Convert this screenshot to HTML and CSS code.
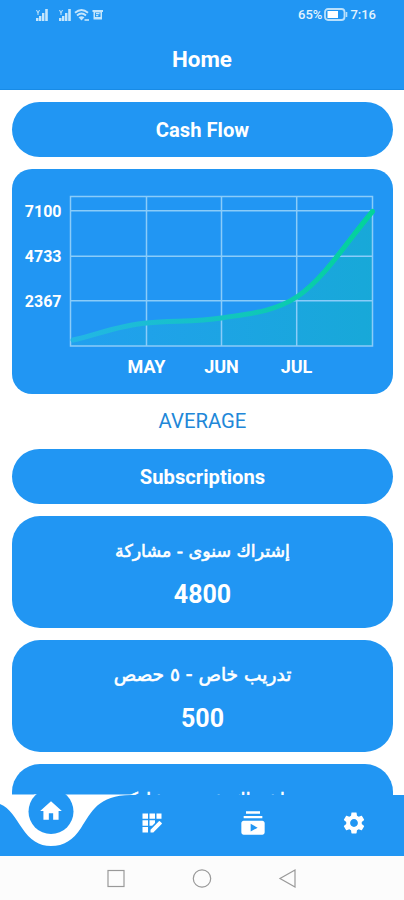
FILE: index.html
```html
<!DOCTYPE html>
<html lang="en">
<head>
	<meta charset="utf-8" />
	<meta name="viewport" content="width=device-width, initial-scale=1">
	<title>Home</title>
	<link rel="stylesheet" href="styles.css">
</head>
<body>
	<div class="phone">
		<div class="statusbar">
			<svg class="signals" width="70" height="14" viewBox="0 0 70 14">
				<g fill="#c5e6fc">
					<path d="M1 13v-3h2.500v3zM4 13V8h2.400v5zM7 13V5h2.400v8zM10.200 13V1h2.600v12zM1 2h1l1 2 1-2h1L3.500 5v2h-1V5z" />
					<path d="M24 13v-3h2.500v3zM27 13V8h2.400v5zM30 13V5h2.400v8zM33.200 13V1h2.600v12zM24 2h1l1 2 1-2h1l-1.500 3v2h-1V5z" />
					<path d="M57.500 2H68v2h-1v7.500h-8.500V4h-1zM60 4.500V9h5.500V4.500z" fill-rule="evenodd" />
					<path d="M61 5h3.500v1.200H61zM61 7h2.300v1.200H61z" />
					<path d="M43.500 9.200l3 3.300 3-3.300q-3-2-6 0z" />
				</g>
				<path d="M40 4.800q6.500-5.600 13 0M42 7.500q4.500-4 9 0" fill="none" stroke="#c5e6fc" stroke-width="1.800" />
				<path d="M49.500 12h4.500" stroke="#c5e6fc" stroke-width="1.600" />
			</svg>
			<div class="status-right">
				<span>65%</span>
				<svg width="24" height="13" viewBox="0 0 24 13">
					<rect x="1" y="1" width="19.500" height="11" rx="3" fill="none" stroke="#b9e0fc" stroke-width="1.800" />
					<rect x="3.500" y="3" width="10.500" height="7" fill="#fff" />
					<path d="M22.500 4v5" stroke="#b9e0fc" stroke-width="1.600" />
				</svg>
				<span>7:16</span>
			</div>
		</div>
		<header class="appbar">Home</header>

		<main class="content">
			<h2 class="pill">Cash Flow</h2>
			<div class="chart">
				<svg width="381" height="225" viewBox="12 169 381 225">
					<defs>
						<linearGradient id="line" x1="0" x2="1" y1="0" y2="0">
							<stop offset="0" stop-color="#23b6e6" />
							<stop offset="1" stop-color="#02d39a" />
						</linearGradient>
					</defs>
					<path class="area" d="M71 340.500C96 335 118 325.500 146.500 323C172 320.500 196 322 221.500 318C246 314 273 312.500 296.700 297C325 278 348 240 373 210.700V346H71z" />
					<path class="grid" d="M70.500 196.500H372.500V346H70.500zM71 210.700H373M71 256.200H373M71 300.700H373M146.500 196.500V346M221.500 196.500V346M296.700 196.500V346" />
					<path class="curve" d="M73 340C96 335 118 325.500 146.500 323C172 320.500 196 322 221.500 318C246 314 273 312.500 296.700 297C325 278 348 240 372.500 211.500" />
					<g class="ylabels">
						<text x="61.500" y="216.500">7100</text>
						<text x="61.500" y="261.500">4733</text>
						<text x="61.500" y="306.500">2367</text>
					</g>
					<g class="xlabels">
						<text x="146.500" y="373">MAY</text>
						<text x="221.500" y="373">JUN</text>
						<text x="296.500" y="373">JUL</text>
					</g>
				</svg>
			</div>
			<p class="average">AVERAGE</p>
			<h2 class="pill">Subscriptions</h2>
			<section class="card">
				<div class="name" dir="rtl" lang="ar">إشتراك سنوى - مشاركة</div>
				<div class="value">4800</div>
			</section>
			<section class="card">
				<div class="name wide" dir="rtl" lang="ar">تدريب خاص - ٥ حصص</div>
				<div class="value">500</div>
			</section>
			<section class="card">
				<div class="name" dir="rtl" lang="ar">إشتراك شهر - مشاركة</div>
			</section>
		</main>

		<nav class="tabs">
			<svg class="tabs-bg" width="404" height="62" viewBox="0 794 404 62">
				<path d="M34 794.500H131V810L90 846H20L0 804C6 806 12 812 20 822z" fill="#fff" />
				<path d="M0 794.500H40V815H0z" fill="#fff" />
				<path d="M0 804C10 808 15 818 22 828C30 840 39 846 51 846C64 846 73 840 81 828C92 811 98 795.500 131 795H404V856H0z" fill="#2196f3" />
				<circle cx="51" cy="811.500" r="22.500" fill="#2196f3" />
			</svg>
			<a class="tab active" href="#" aria-label="Home">
				<svg width="26" height="26" viewBox="0 0 24 24"><path d="M10 20v-6h4v6h5v-8h3L12 3 2 12h3v8z" /></svg>
			</a>
			<a class="tab" href="#" aria-label="Register">
				<svg width="20" height="20" viewBox="0 0 20 20"><path d="M.500.500H6v5.300H.500zM7.500.500H13v5.300H7.500zM14.500.500h5v5.300h-5zM.500 7.300H6v5.400H.500zM7.500 7.300H13v2.600l-2.800 2.800H7.500zM.500 14H6v5.500H.500zM8.500 16.700v2.800h2.800l8.400-8.400q.5-.5 0-1l-1.800-1.800q-.5-.5-1 0z" /></svg>
			</a>
			<a class="tab" href="#" aria-label="Subscriptions">
				<svg width="28" height="28" viewBox="0 0 24 24"><path d="M20 8H4V6h16v2zm-2-6H6v2h12V2zm4 10v8c0 1.100-.9 2-2 2H4c-1.100 0-2-.9-2-2v-8c0-1.100.9-2 2-2h16c1.100 0 2 .9 2 2zm-6 4l-6-3.270v6.530L16 16z" /></svg>
			</a>
			<a class="tab" href="#" aria-label="Settings">
				<svg width="26" height="26" viewBox="0 0 24 24"><path d="M19.140 12.940c.04-.3.060-.61.060-.94 0-.32-.02-.64-.07-.94l2.030-1.580c.18-.14.230-.41.120-.61l-1.920-3.320c-.12-.22-.37-.29-.59-.22l-2.390.960c-.5-.38-1.030-.7-1.620-.94l-.36-2.540c-.04-.24-.24-.41-.48-.41h-3.840c-.24 0-.43.170-.47.410l-.36 2.540c-.59.240-1.130.570-1.620.940l-2.390-.96c-.22-.08-.47 0-.59.220L2.740 8.870c-.12.210-.08.470.120.610l2.030 1.580c-.05.300-.09.630-.09.940s.02.640.070.940l-2.030 1.580c-.18.140-.23.410-.12.610l1.920 3.320c.12.220.37.290.59.220l2.390-.96c.5.380 1.030.7 1.620.940l.36 2.540c.05.240.24.410.48.410h3.840c.24 0 .44-.17.470-.41l.36-2.540c.59-.24 1.130-.56 1.620-.94l2.390.960c.22.080.47 0 .59-.22l1.920-3.320c.12-.22.070-.47-.12-.61l-2.010-1.580zM12 15.600c-1.980 0-3.600-1.620-3.600-3.600s1.620-3.600 3.600-3.600 3.600 1.620 3.600 3.600-1.620 3.600-3.600 3.600z" /></svg>
			</a>
		</nav>

		<div class="sysnav">
			<svg width="20" height="20" viewBox="0 0 20 20"><rect x="2" y="2.500" width="16" height="16" /></svg>
			<svg width="20" height="20" viewBox="0 0 20 20"><circle cx="10" cy="10.500" r="8.700" /></svg>
			<svg width="20" height="20" viewBox="0 0 20 20"><path d="M17 2v17L2 10.500z" /></svg>
		</div>
	</div>
</body>
</html>
```
FILE: styles.css
```css
* {
  box-sizing: border-box;
}

body {
  margin: 0;
  background: #fff;
  font-family: Roboto, "Liberation Sans", sans-serif;
  color: #fff;
}

.phone {
  display: flex;
  flex-direction: column;
  height: 900px;
  overflow: hidden;
}

.statusbar {
  display: flex;
  justify-content: space-between;
  align-items: center;
  flex: none;
  height: 29px;
  padding: 0 28px 0 35px;
  background: #2196f3;
}

.status-right {
  display: flex;
  align-items: center;
  gap: 2px;
  font-size: 13px;
  font-weight: 500;
  color: #e3f3fe;
}

.appbar {
  flex: none;
  height: 61px;
  line-height: 61px;
  background: #2196f3;
  border-bottom: 1px solid #188be6;
  text-align: center;
  font-size: 22.4px;
  font-weight: 700;
}

.content {
  display: flex;
  flex-direction: column;
  flex: none;
  height: 705px;
  padding: 12px 11px 0 12px;
  overflow: hidden;
}

.pill {
  flex: none;
  height: 55px;
  margin: 0;
  line-height: 56px;
  border-radius: 28px;
  background: #2196f3;
  text-align: center;
  font-size: 20.2px;
  font-weight: 700;
}

.chart {
  flex: none;
  height: 225px;
  margin-top: 12px;
  border-radius: 20px;
  background: #2196f3;
}

.chart svg {
  display: block;
}

.grid {
  fill: none;
  stroke: #8accf9;
  stroke-width: 1.5;
}

.area {
  fill: url(#line);
  opacity: .3;
}

.curve {
  fill: none;
  stroke: url(#line);
  stroke-width: 5;
  stroke-linecap: round;
}

.ylabels,
.xlabels {
  fill: #fff;
  font-weight: 700;
}

.ylabels {
  font-size: 16px;
  text-anchor: end;
}

.xlabels {
  font-size: 18px;
  text-anchor: middle;
}

.average {
  flex: none;
  height: 55px;
  margin: 0;
  line-height: 55px;
  text-align: center;
  font-size: 20.3px;
  color: #2187d8;
}

.card {
  flex: none;
  height: 112px;
  margin-top: 12px;
  padding-top: 20px;
  border-radius: 28px;
  background: #2196f3;
  text-align: center;
}

.name {
  height: 30px;
  line-height: 30px;
  font-family: "DejaVu Sans", sans-serif;
  font-size: 17.4px;
  -webkit-text-stroke: .6px #fff;
}

.name.wide {
  font-size: 18.6px;
}

.value {
  height: 30px;
  margin-top: 13px;
  line-height: 31px;
  font-size: 25px;
  font-weight: 700;
}

.tabs {
  position: relative;
  display: flex;
  flex: none;
  height: 61px;
}

/* notched bar behind the icons */
.tabs-bg {
  position: absolute;
  left: 0;
  bottom: 0;
}

.tab {
  position: relative;
  display: flex;
  flex: 1;
  align-items: center;
  justify-content: center;
  padding-bottom: 5px;
}

.tab.active {
  padding-bottom: 29px;
}

.tab svg {
  fill: #fff;
}

.sysnav {
  display: flex;
  justify-content: center;
  align-items: center;
  gap: 66px;
  flex: none;
  height: 44px;
  background: #fcfcfc;
}

.sysnav svg {
  fill: none;
  stroke: #999;
  stroke-width: 1.2;
}
```
